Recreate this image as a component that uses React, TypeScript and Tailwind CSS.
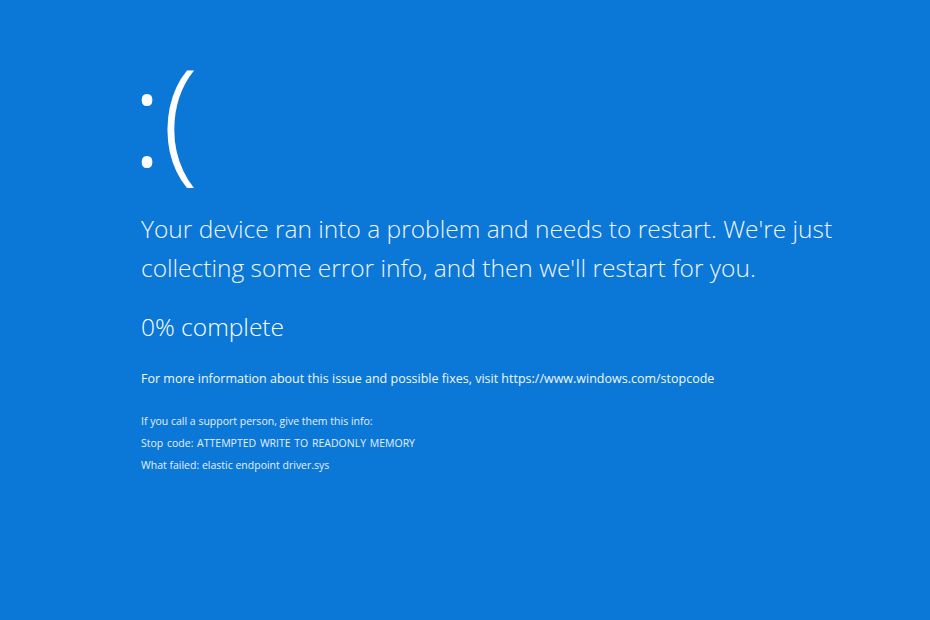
export default function App() {
  return (
    <div
      className="w-[930px] h-[620px] bg-[#0b77d7] text-white overflow-hidden"
      style={{ fontFamily: '"Open Sans", "Noto Sans", sans-serif' }}
    >
      <div className="pl-[141px] pt-[48px]">
        <div className="-ml-[10px] text-[134px] font-light leading-[134px] tracking-[-1px]">:(</div>
        <p className="mt-[27px] text-[24.5px] font-light leading-[39px] text-[#f0f6fd]">
          Your device ran into a problem and needs to restart. We're just
          <br />
          collecting some error info, and then we'll restart for you.
        </p>
        <p className="mt-[24px] text-[24.5px] font-light leading-[32px]">0% complete</p>
        <p className="mt-[28px] text-[12.5px] leading-[16px] text-[#f2f7fd]">
          For more information about this issue and possible fixes, visit https://www.windows.com/stopcode
        </p>
        <div className="mt-[27px] flex flex-col gap-[8px] text-[10.5px] leading-[14px] text-[#e6effa]">
          <p>If you call a support person, give them this info:</p>
          <p className="[word-spacing:1px]">Stop code: ATTEMPTED WRITE TO READONLY MEMORY</p>
          <p>What failed: elastic endpoint driver.sys</p>
        </div>
      </div>
    </div>
  );
}
